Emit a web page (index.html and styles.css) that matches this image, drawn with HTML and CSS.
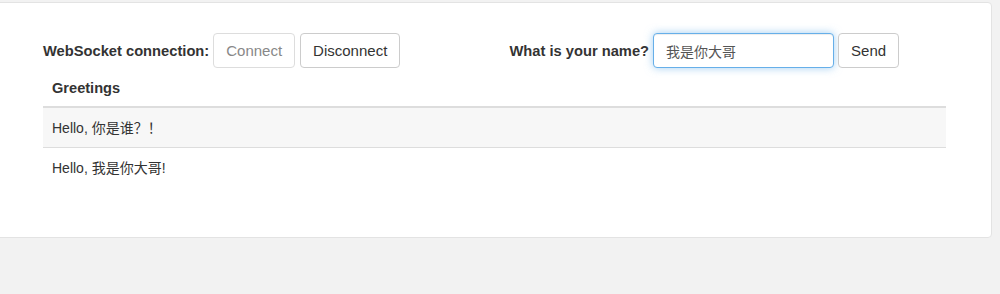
FILE: index.html
```html
<!DOCTYPE html>
<html lang="zh-CN">
<head>
    <meta charset="UTF-8">
    <title>WebSocket Greetings</title>
    <link rel="stylesheet" href="styles.css">
</head>
<body>
    <div class="panel">
        <div class="controls">
            <form class="form-inline">
                <label for="connect">WebSocket connection:</label>
                <button id="connect" class="btn" type="button" disabled>Connect</button>
                <button id="disconnect" class="btn" type="button">Disconnect</button>
            </form>
            <form class="form-inline">
                <label for="name">What is your name?</label>
                <input type="text" id="name" class="form-control" value="我是你大哥">
                <button id="send" class="btn" type="button">Send</button>
            </form>
        </div>
        <table class="table">
            <thead>
                <tr><th>Greetings</th></tr>
            </thead>
            <tbody>
                <tr class="odd"><td>Hello, 你是谁？！</td></tr>
                <tr><td>Hello, 我是你大哥!</td></tr>
            </tbody>
        </table>
    </div>
</body>
</html>
```

FILE: styles.css
```css
* {
    margin: 0;
    padding: 0;
    box-sizing: border-box;
}

body {
    background: #f2f2f2;
    font-family: 'Liberation Sans', 'Noto Sans CJK SC', sans-serif;
    font-size: 14px;
    line-height: 20px;
    color: #333;
    padding-top: 2px;
}

.panel {
    width: 1002px;
    margin-left: -10px;
    background: #fff;
    border: 1px solid #e3e3e3;
    border-radius: 4px;
    padding: 30px 45px 50px 52px;
}

.controls {
    display: grid;
    grid-template-columns: 1fr 1fr;
    column-gap: 30px;
}

.form-inline {
    display: flex;
    align-items: center;
    height: 35px;
    font-size: 14.7px;
}

.form-inline label {
    font-weight: bold;
    margin-right: 4px;
}

.btn {
    height: 35px;
    padding: 6px 12px;
    font-family: inherit;
    font-size: 15px;
    color: #333;
    background: #fff;
    border: 1px solid #ccc;
    border-radius: 4px;
    margin-right: 5px;
}

.btn:disabled {
    color: #888;
    border-color: #ddd;
}

.form-control {
    width: 181px;
    height: 35px;
    padding: 6px 12px;
    font-family: inherit;
    font-size: 14px;
    color: #555;
    border: 1px solid #66afe9;
    border-radius: 4px;
    outline: 0;
    box-shadow: inset 0 1px 1px rgba(0, 0, 0, .075), 0 0 8px rgba(102, 175, 233, .6);
    margin-right: 4px;
}

.table {
    width: 100%;
    margin-top: 2px;
    border-collapse: collapse;
}

.table th,
.table td {
    text-align: left;
    padding: 8px 9px;
}

.table th {
    font-size: 14.6px;
    border-bottom: 2px solid #ddd;
}

.table td {
    border-top: 1px solid #ddd;
    padding-top: 10px;
    padding-bottom: 9px;
}

.table .odd td {
    background: #f7f7f7;
}
```
